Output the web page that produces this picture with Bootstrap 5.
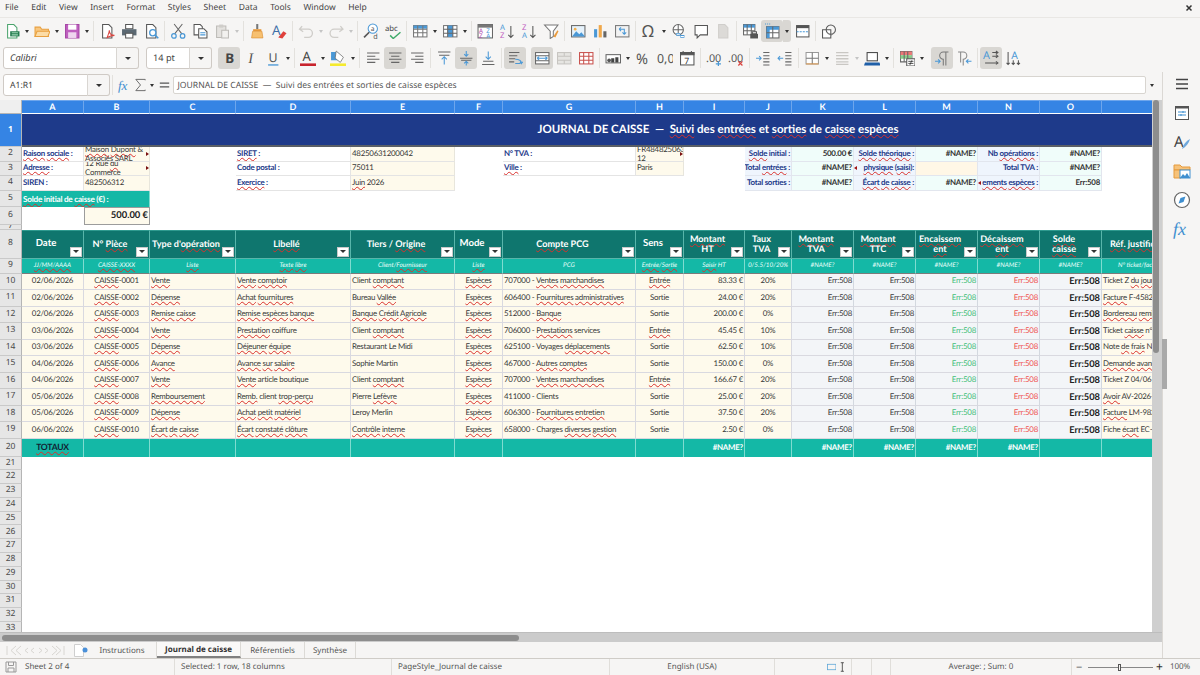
<!DOCTYPE html>
<html lang="en">
<head>
<meta charset="UTF-8">
<title>Journal de caisse - LibreOffice Calc</title>
<link href="https://cdn.jsdelivr.net/npm/bootstrap@5.3.3/dist/css/bootstrap.min.css" rel="stylesheet">
<style>
html,body{height:675px;overflow:hidden}
body{background:#f6f5f4;font-family:"Noto Sans",sans-serif;font-size:8.6px;color:#3d3d3d;text-rendering:geometricPrecision}
.menubar{height:18px;padding-left:5px;gap:12.6px;border-bottom:1px solid #e9e7e4;font-size:8.5px;line-height:16px;color:#444}
.menubar .nav-link{padding:0;color:#444}
.tbar{height:26px;padding-left:1px}
.tbar2{height:28px}
.tb{width:22px;height:22px;flex:none;display:flex;align-items:center;justify-content:center;border-radius:3px}
.tb svg{width:16.5px;height:16.5px;display:block}
.tb.on,.ar.on{background:#d9d7d3}
.ar{width:8px;height:22px;flex:none;display:flex;align-items:center;justify-content:center;border-radius:0 3px 3px 0}
.ar::after{content:"";border:solid transparent;border-width:3px 2.5px 0;border-top-color:#333}
.ar.dim::after{border-top-color:#c4c4c4}
.vsep{width:5px;height:20px;flex:none;display:flex;justify-content:center}
.vsep::after{content:"";width:1px;background:#e3e1dd}
.vgap{width:5px;flex:none}
.combo{height:22px;flex:none}
.combo .form-control,.namebox .form-control{font-size:8.6px;padding:0 6px;border-color:#cfcac5;border-radius:3px 0 0 3px;line-height:20px;color:#444;background:#fff;box-shadow:none}
.combo .form-control{font-size:9.2px}
.combo .btn,.namebox .btn{width:23px;padding:0;border:1px solid #cfcac5;border-left-color:#d9d6d2;border-radius:0 3px 3px 0;background:#f6f5f4;display:flex;align-items:center;justify-content:center}
.combo .btn::after,.namebox .btn::after{content:"";border:solid transparent;border-width:3.5px 3.5px 0;border-top-color:#333}
.fontbox{width:136px;margin-left:3px}
.sizebox{width:66px;margin:0 6px 0 7px}
.workarea{height:586px}
.leftcol{width:1162px;flex:none}
.fbar{height:28px;padding:1px 0 3px 3px}
.namebox{width:107px;height:22px;flex:none}
.fx-ico{width:15px;flex:none;display:flex;justify-content:center;margin-left:1.5px}
.fx-ico svg{width:16px;height:16px}
.sig{margin-left:1px}
.finput{width:973px;height:18px;margin:0 2px 0 .5px;flex:none;background:#fff;border:1px solid #d8d5d0;border-radius:2px;font-size:8.6px;line-height:16px;padding:0 4px;color:#555;white-space:pre}
.sidebar{width:38px;flex:none;border-left:1px solid #dbd8d4;padding-top:2px}
.side-ico{width:20px;height:20px;margin-bottom:9px}
.side-ico:first-of-type{margin-bottom:12px}
.side-ico svg{width:20px;height:20px;display:block}
.side-handle{top:267px;left:-1px;width:5px;height:50px;background:#a9a9a9}
.sheet-wrap{height:532px}
.sheet{width:1152px;height:532px;overflow:hidden;display:grid;background:#fff;
  grid-template-columns:22px 62px 66px 86px 115px 104px 48px 133px 48px 61px 47px 62px 62px 62px 62px 62px 312px;
  grid-template-rows:14px 33px 14.5px 14.5px 14.5px 16.5px 17.5px 5px 29px 15px repeat(10,16.5px) 18px repeat(13,13.8px);
  font-family:Lato,sans-serif;font-size:7.9px;letter-spacing:-.24px;color:#3a3a3a}
.ce{display:flex;align-items:center;overflow:hidden;white-space:nowrap;padding:0 1px;min-width:0;min-height:0;position:relative}
.ce>span{flex:none}
.ce u{text-decoration:underline wavy #d9302c 1px;text-decoration-skip-ink:none;text-underline-offset:.5px}
.corner{background:#efefef;border-right:1px solid #b5b5b5;border-bottom:1px solid #b5b5b5}
.colh{background:#3584e4;color:#fff;font-weight:700;justify-content:center;border-right:1px solid #6ea6ec;border-bottom:1px solid #fff;font-size:9px;border-top:1px solid #6ea6ec;letter-spacing:0}
.rowh{background:#e6e6e6;color:#4a4a4a;justify-content:center;border-right:1px solid #b5b5b5;border-bottom:1px solid #c9c9c9;font-family:"Noto Sans",sans-serif;font-size:8.5px;letter-spacing:0}
.rowh.sel{background:#3584e4;color:#fff;font-weight:700}
.title{background:#1e3a8a;color:#fff;font-weight:700;font-size:11.5px;letter-spacing:0;justify-content:center;white-space:pre;border-bottom:2px solid #5a5f66}
.lab{background:#fff;color:#1e3a8a;font-weight:700;border-right:1px solid #e4e4e4;border-bottom:1px solid #e4e4e4}
.val{background:#fefaec;border-right:1px solid #e8e6dc;border-bottom:1px solid #e4e4e4}
.kl{background:#eff5fd;color:#1e3a8a;font-weight:700;border-right:1px solid #e2e6ee;border-bottom:1px solid #e2e6ee}
.kv{background:#f0fdfa;color:#333;font-weight:700;border-right:1px solid #e2e6ee;border-bottom:1px solid #e2e6ee}
.kv.inp{background:#fff7e6}
.wrap2{white-space:normal;line-height:9px}
.wrap2>span{flex:auto}
.ofr::after{content:"";position:absolute;right:0;top:50%;margin-top:-2px;border:solid transparent;border-width:2px 0 2px 3px;border-left-color:#7a1010}
.ofl::after{content:"";position:absolute;left:0;top:50%;margin-top:-2px;border:solid transparent;border-width:2px 3px 2px 0;border-right-color:#a01414}
.teal{background:#14b8a6;color:#fff;font-weight:700;border-right:1px solid #7fdcd0}
.solde0{font-size:8.2px}
.balance{background:#fefaec;border:1.5px solid #9c9c9c;color:#222;font-weight:700;font-size:9.4px;letter-spacing:0}
.hd{background:#0f766e;color:#fff;font-weight:700;font-size:9.1px;letter-spacing:0;padding:0 14px 0 1px;justify-content:center;text-align:center;line-height:10.5px;border-right:1px solid #58b5aa;border-bottom:1px solid #58b5aa;border-top:1px solid #2f9a8f}
.hd.big{font-size:9.6px}
.hint{background:#14b8a6;color:#e9fffb;font-style:italic;font-size:6.4px;letter-spacing:0;justify-content:center;border-right:1px solid #7fdcd0;border-bottom:1.5px solid #7b7b7b}
.flt{position:absolute;right:1px;bottom:1px;width:12px;height:10px;background:#fff;border:1px solid #c9c9c9;display:flex;align-items:center;justify-content:center}
.flt::after{content:"";border:solid transparent;border-width:3px 3px 0;border-top-color:#333}
.rw{background:#fefaec;border-right:1px solid #d9d9e0;border-bottom:1px solid #d9d9e0}
.calc{background:#f3f5f8;border-right:1px solid #d3d8df;border-bottom:1px solid #d9d9e0}
.grn{color:#3fbf78}
.red{color:#ef5350}
.errb{font-weight:700;font-size:9.3px;letter-spacing:0;color:#222}
.tot-l{color:#123;font-size:8.6px}
.vscroll{width:10px;flex:none;background:#cfcfcf;padding:0 3px 0 1px}
.vscroll div{height:253px;background:#8d8d8d;border-radius:3px}
.hscroll{height:10px;background:#cbcbcb;padding:2px 0 2px 2px;border-top:1px solid #bdbdbd}
.hscroll div{width:517px;height:6px;background:#8d8d8d;border-radius:3px}
.tabbar{height:16px;font-size:8px;color:#555;padding-left:6px}
.navpale{width:59px;height:11px;flex:none}
.navpale svg{display:block}
.newsheet{margin-left:9px}
.newdot{margin-left:-3px;margin-right:-1px;flex:none}
.tabbar .nav-link{padding:0;color:#555;line-height:15px}
.tabpad{flex:none;height:16px;border-right:1px solid #dcdad6;display:flex;align-items:center;justify-content:center}
.tabpad.cur{background:#faf9f8;border-bottom:2px solid #808080;font-weight:700;color:#333}
.statbar{height:17px;border-top:1px solid #cfccc7;font-size:8px;color:#555}
.stc{flex:none;height:16px;line-height:16px;border-right:1px solid #e0deda;padding:0 6px;white-space:nowrap}
.slider-line{width:65px;height:1px;background:#888;position:relative}
.slider-thumb{position:absolute;left:30px;top:-3px;width:3px;height:7px;background:#f6f5f4;border:1px solid #555}
.closex{flex:none;margin:4px 7px 0 auto;width:8px;height:8px}
.st-a{width:175px;padding-left:5px}.st-b{width:217px}.st-c{width:218px}.st-d{width:165px}.st-e{width:77px;padding-left:52px}.st-f{width:20px}.st-g{width:19px}.st-h{width:181px}
.st-z{padding-left:4px}.st-m{font-size:11px;line-height:11px;width:12px}.st-p{font-size:12px;line-height:12px;color:#333;margin-left:3px}.st-q{margin-left:7px}
#t1{width:69px}#t2{width:84px}#t3{width:64px}#t4{width:51px}
</style>
</head>
<body class="d-flex flex-column">

<nav class="nav menubar flex-nowrap">
  <a class="nav-link">File</a><a class="nav-link">Edit</a><a class="nav-link">View</a><a class="nav-link">Insert</a><a class="nav-link">Format</a><a class="nav-link">Styles</a><a class="nav-link">Sheet</a><a class="nav-link">Data</a><a class="nav-link">Tools</a><a class="nav-link">Window</a><a class="nav-link">Help</a>
  <svg class="closex" viewBox="0 0 8 8"><path d="M1.5 1.5l5 5M6.5 1.5l-5 5" stroke="#333" stroke-width="1.5"/></svg>
</nav>

<div class="tbar d-flex align-items-center" id="tb1"></div>

<div class="tbar2 d-flex align-items-center">
  <div class="input-group flex-nowrap combo fontbox"><div class="form-control fst-italic">Calibri</div><button class="btn" type="button"></button></div>
  <div class="input-group flex-nowrap combo sizebox"><div class="form-control">14 pt</div><button class="btn" type="button"></button></div>
  <div class="d-flex align-items-center" id="tb2"></div>
</div>

<div class="workarea d-flex">
  <div class="leftcol d-flex flex-column">
    <div class="fbar d-flex align-items-center">
      <div class="input-group flex-nowrap namebox"><div class="form-control">A1:R1</div><button class="btn" type="button"></button></div>
      <div class="vsep"></div>
      <div class="fx-ico"><svg viewBox="0 0 16 16"><text x="1" y="13" font-family="Liberation Serif,serif" font-style="italic" font-size="14" fill="#3f8fd0">fx</text></svg></div>
      <div class="fx-ico sig"><svg viewBox="0 0 16 16"><path d="M13 3V2H3l5 6-5 6h10v-1" fill="none" stroke="#666"/></svg></div>
      <div class="ar"></div>
      <div class="fx-ico"><svg viewBox="0 0 16 16"><path d="M3 6h10M3 10h10" stroke="#555" stroke-width="1.4"/></svg></div>
      <div class="finput">JOURNAL DE CAISSE  —  Suivi des entrées et sorties de caisse espèces</div>
      <div class="ar"></div>
    </div>
    <div class="sheet-wrap d-flex">
      <div class="sheet" id="sheet"></div>
      <div class="vscroll"><div></div></div>
    </div>
    <div class="hscroll"><div></div></div>
    <div class="tabbar d-flex align-items-center">
      <div class="navpale"><svg width="59" height="11" viewBox="0 0 59 11" fill="none" stroke="#d8d6d2"><path d="M1 1v9M10 1l-5 4.5 5 4.5M15 1l-5 4.5 5 4.5M22 3l-3 2.5 3 2.5M28 3l-3 2.5 3 2.5M33 3l3 2.5-3 2.5M39 3l3 2.5-3 2.5M46 1l5 4.5-5 4.5M50 1l5 4.5-5 4.5M58 1v9"/></svg></div>
      <svg class="newsheet" width="10" height="13" viewBox="0 0 10 13"><path d="M.5.5h6l3 3v9H.5z" fill="#fff" stroke="#cfcfcf"/></svg>
      <svg class="newdot" width="8" height="8" viewBox="0 0 8 8"><circle cx="4" cy="4" r="2.5" fill="#4a90d9"/></svg>
      <nav class="nav flex-nowrap">
        <a class="nav-link tabpad" id="t1">Instructions</a>
        <a class="nav-link tabpad cur" id="t2">Journal de caisse</a>
        <a class="nav-link tabpad" id="t3">Référentiels</a>
        <a class="nav-link tabpad" id="t4">Synthèse</a>
      </nav>
    </div>
  </div>
  <div class="sidebar d-flex flex-column align-items-center position-relative">
    <div class="side-handle position-absolute"></div>
    <div class="side-ico"><svg viewBox="0 0 20 20"><path d="M4 5.5h12M4 10h12M4 14.5h12" stroke="#444" stroke-width="1.7" fill="none"/></svg></div>
    <div class="side-ico"><svg viewBox="0 0 20 20"><rect x="3.5" y="3.5" width="13" height="13" fill="#fff" stroke="#555"/><path d="M3.5 3.5h13v2h-13z" fill="#555"/><path d="M6 9h8M6 12h8" stroke="#3f8fd0"/><path d="M11 8v2M9 11v2" stroke="#3f8fd0"/></svg></div>
    <div class="side-ico"><svg viewBox="0 0 20 20"><text x="2" y="15" font-family="Noto Sans,sans-serif" font-size="15" fill="#444">A</text><path d="M10 17c1-4 4-8 8-10-1 4-4 8-8 10z" fill="#6fa8dc"/></svg></div>
    <div class="side-ico"><svg viewBox="0 0 20 20"><path d="M2 4h6l2 2h8v3H2z" fill="#f6c27a" stroke="#e59a3c"/><path d="M2 9h7v8H2z" fill="#f6c27a" stroke="#e59a3c"/><rect x="8" y="9" width="10" height="8" fill="#fff" stroke="#3f8fd0"/><path d="M8 17l3-4 2 2 2-3 3 5z" fill="#3f8fd0"/></svg></div>
    <div class="side-ico"><svg viewBox="0 0 20 20"><circle cx="10" cy="10" r="7.5" fill="#fff" stroke="#666" stroke-width="1.2"/><path d="M6.5 13.5l2-5.5 5-1.5-2 5.5z" fill="#3f8fd0"/></svg></div>
    <div class="side-ico"><svg viewBox="0 0 20 20"><text x="1" y="16" font-family="Liberation Serif,serif" font-style="italic" font-size="18" fill="#3f8fd0">fx</text></svg></div>
  </div>
</div>

<div class="statbar d-flex align-items-center">
  <div class="stc d-flex align-items-center st-a"><svg width="12" height="12" viewBox="0 0 12 12" class="me-2" fill="none" stroke="#999"><path d="M1 1h10v10H1zM3.5 1v3.5h5V1M3 11V7h6v4"/></svg>Sheet 2 of 4</div>
  <div class="stc st-b">Selected: 1 row, 18 columns</div>
  <div class="stc st-c">PageStyle_Journal de caisse</div>
  <div class="stc st-d text-center">English (USA)</div>
  <div class="stc st-e d-flex align-items-center"><svg width="12" height="8" viewBox="0 0 12 8"><rect x=".5" y=".5" width="11" height="7" fill="none" stroke="#5aa5d6"/></svg><svg width="6" height="12" viewBox="0 0 6 12" class="ms-1" fill="none" stroke="#333"><path d="M1 .5h4M3 .5v11M1 11.5h4"/></svg></div>
  <div class="stc st-f"></div>
  <div class="stc st-g"></div>
  <div class="stc st-h text-center">Average: ; Sum: 0</div>
  <div class="d-flex align-items-center flex-grow-1 st-z">
    <span class="st-m">−</span><div class="slider-line"><div class="slider-thumb"></div></div><span class="st-p">+</span><span class="st-q">100%</span>
  </div>
</div>

<script>
const S='#555',B='#4a98d6';
const docp='M3.5 1.5h6l3 3v10h-9z';
const ico={
new:`<path d="${docp}" fill="#fff" stroke="#4aa36c"/><path d="M6 8h9v5H6z" fill="#237a4e"/><path d="M7.5 9.5h6M7.5 11.5h6" stroke="#9ed6b5"/>`,
open:`<path d="M1 13V4h5l1.5 2H14v7z" fill="#f9c77f" stroke="#e8a03f"/><path d="M1 13l2-5h12.5l-2 5z" fill="#fcdca6" stroke="#e8a03f"/>`,
save:`<path d="M1.5 1.5h13v13h-13z" fill="#bf5fbf" stroke="#a445a4"/><path d="M4 1.5h8v5H4z" fill="#fff"/><path d="M4 9h8v5.5H4z" fill="#efd5ef"/>`,
pdf:`<path d="${docp}" fill="#fff" stroke="${S}"/><path d="M8 14c1-3 2-5 2-7 0 3 2 5 5 5-3 0-5 1-7 2z" fill="none" stroke="#d9443f"/>`,
print:`<path d="M4.5 1.5h7v4h-7z" fill="#fff" stroke="${S}"/><path d="M1 6h14v6H1z" fill="#5b6872"/><path d="M4.5 10h7v4.5h-7z" fill="#fff" stroke="${S}"/>`,
prev:`<path d="${docp}" fill="#fff" stroke="${S}"/><circle cx="9.5" cy="9.5" r="3" fill="#fff" stroke="${B}" stroke-width="1.3"/><path d="M11.8 11.8l3 3" stroke="${B}" stroke-width="1.5"/>`,
cut:`<path d="M4 1l7.5 9.5M12 1L4.5 10.5" stroke="#666" fill="none"/><circle cx="3.8" cy="12.5" r="2.2" fill="none" stroke="${B}" stroke-width="1.2"/><circle cx="12.2" cy="12.5" r="2.2" fill="none" stroke="${B}" stroke-width="1.2"/>`,
copy:`<path d="M2 1.5h6l2 2v8H2z" fill="#fff" stroke="${S}"/><path d="M6.5 5.5h5l3 3v6h-8z" fill="#fff" stroke="${S}"/><path d="M8 9.5h5M8 11.5h5" stroke="${B}"/>`,
paste:`<path d="M2.5 3h9v11h-9z" fill="#e4e2df" stroke="#bdbbb7"/><path d="M5 1.5h4v3H5z" fill="#cfcdc9"/><path d="M7.5 7h6.5v7.5H7.5z" fill="#f2f1ef" stroke="#bdbbb7"/>`,
clone:`<path d="M7 1h2v5H7z" fill="#777"/><path d="M4 6h8v2H4z" fill="#e89a3c"/><path d="M3.5 8h9l1 6.5h-11z" fill="#f7c070" stroke="#d98a2c" stroke-width=".6"/>`,
clear:`<text x="1" y="12" font-family="Noto Sans,sans-serif" font-size="13" fill="#3f6fa8">A</text><path d="M7 14l5-6 3 2-4 5z" fill="#e0413c"/>`,
undo:`<path d="M4 3L1.5 6 5 8.5M2 6h8a4 4 0 0 1 0 8H6" fill="none" stroke="#cfcdc9" stroke-width="1.3"/>`,
redo:`<path d="M12 3l2.5 3L11 8.5M14 6H6a4 4 0 0 0 0 8h4" fill="none" stroke="#cfcdc9" stroke-width="1.3"/>`,
find:`<circle cx="9.5" cy="5.5" r="4.5" fill="#fff" stroke="${B}"/><path d="M6 9l-5 5" stroke="#555" stroke-width="1.6"/><text x="7.6" y="7.5" font-family="Noto Sans,sans-serif" font-size="6.5" fill="#555">a</text><text x="10" y="15.5" font-family="Noto Sans,sans-serif" font-size="7" fill="#555">d</text>`,
spell:`<text x="0" y="8" font-family="Noto Sans,sans-serif" font-size="7.5" fill="#444">abc</text><path d="M5 12l3 3 7-6" fill="none" stroke="#3faa6a" stroke-width="1.4"/>`,
rows:`<rect x="1.5" y="2.5" width="13" height="11" fill="#fff" stroke="#777"/><path d="M1.5 2.5h13v3h-13z" fill="${B}"/><path d="M1.5 9.5h13M5.5 2.5v11M10.5 2.5v11M1.5 6h13" stroke="#777" fill="none"/>`,
cols:`<rect x="1.5" y="2.5" width="13" height="11" fill="#fff" stroke="#777"/><path d="M5.5 2.5h5v11h-5z" fill="${B}"/><path d="M1.5 6h13M1.5 10h13M5.5 2.5v11M10.5 2.5v11" stroke="#666" fill="none"/>`,
sortg:`<rect x="1" y="1.5" width="14" height="13" fill="#fff" stroke="#666"/><path d="M1 1.5h14v3H1z" fill="#777"/><text x="2" y="9.5" font-size="6" font-family="Noto Sans,sans-serif" fill="#b04db0">A</text><text x="9" y="9.5" font-size="6" font-family="Noto Sans,sans-serif" fill="${B}">Z</text><text x="2" y="14.5" font-size="6" font-family="Noto Sans,sans-serif" fill="#b04db0">Z</text><text x="9" y="14.5" font-size="6" font-family="Noto Sans,sans-serif" fill="${B}">A</text>`,
asc:`<text x="1" y="7" font-size="7.5" font-family="Noto Sans,sans-serif" fill="${B}">A</text><text x="1" y="15" font-size="7.5" font-family="Noto Sans,sans-serif" fill="#c05cc0">Z</text><path d="M11.5 3v11M9 11.5l2.5 2.5 2.5-2.5" fill="none" stroke="${S}"/>`,
desc:`<text x="1" y="7" font-size="7.5" font-family="Noto Sans,sans-serif" fill="#c05cc0">Z</text><text x="1" y="15" font-size="7.5" font-family="Noto Sans,sans-serif" fill="${B}">A</text><path d="M11.5 3v11M9 11.5l2.5 2.5 2.5-2.5" fill="none" stroke="${S}"/>`,
filt:`<path d="M1.5 2h13L10 8v5l-3 2V8z" fill="#fff" stroke="#777"/><path d="M10 13l4-6 1 1-3 6z" fill="#e99a3c"/>`,
img:`<rect x="1.5" y="2.5" width="13" height="11" fill="#e6f2fb" stroke="#666"/><path d="M2 13l4-5 3 3 2-2 3.5 4z" fill="${B}"/><circle cx="5" cy="6" r="1.3" fill="#f5b14c"/>`,
chart:`<path d="M2 6h3v8H2z" fill="${B}"/><path d="M6.5 2h3v12h-3z" fill="#f0a84a"/><path d="M11 8h3v6h-3z" fill="#666"/>`,
pivot:`<rect x="1.5" y="2.5" width="13" height="11" fill="#f2f2f2" stroke="#777"/><path d="M5 6h5v5M10 11l-1.8-1.8M10 11l1.8-1.8M5 6l1.8-1.8M5 6l1.8 1.8" fill="none" stroke="${B}"/>`,
omega:`<text x="1" y="14" font-family="Noto Sans,sans-serif" font-size="16" fill="#555">Ω</text>`,
link:`<circle cx="7" cy="6.5" r="5" fill="#fff" stroke="#666"/><path d="M2 6.5h10M7 1.5v10" stroke="#666"/><path d="M5 11h4M9 13h4" stroke="${B}" stroke-width="2.6"/><path d="M5.5 11h3M9.5 13h3" stroke="#fff"/>`,
note:`<path d="M2 2.5h12v9H7l-3 3v-3H2z" fill="#fff" stroke="${S}"/>`,
hdr:`<path d="M3.5 1.5h6l3 3v10h-9z" fill="#dcdad7" stroke="#d0cecb"/>`,
prange:`<rect x="1.5" y="1.5" width="11" height="10" fill="#fff" stroke="#666"/><path d="M1.5 1.5h11v3h-11z" fill="${B}"/><path d="M1.5 7.5h11M5 1.5v10M9 1.5v10" stroke="#666"/><path d="M8 10.5h7.5V15H8z" fill="#555"/><path d="M10 8.5h4v2h-4z" fill="#fff" stroke="#555"/>`,
freeze:`<rect x="2.5" y="3.5" width="12" height="11" fill="#fff" stroke="#666"/><path d="M2.5 3.5h12v3h-12zM2.5 3.5h3v11h-3z" fill="${B}"/><path d="M2.5 9.5h12M8.5 3.5v11" stroke="#666"/><path d="M1 1h5" stroke="${B}" stroke-dasharray="1 1"/>`,
split:`<rect x="2.5" y="2.5" width="12" height="11" fill="#fff" stroke="#555"/><path d="M2.5 2.5h12v2.5h-12z" fill="#555"/><path d="M2.5 8.5h12" stroke="${B}" stroke-dasharray="2 1"/>`,
shape:`<path d="M1.5 6.5h8v8h-8z" fill="#fff" stroke="#555"/><circle cx="9.5" cy="6.5" r="4.5" fill="none" stroke="#555"/><path d="M6 9l3.5 3.5L13 9" fill="none" stroke="#888" stroke-width=".7"/>`,
B:`<text x="4" y="13" font-family="Noto Sans,sans-serif" font-weight="700" font-size="13" fill="#444">B</text>`,
I:`<text x="5" y="13" font-family="Liberation Serif,serif" font-style="italic" font-size="14" fill="#555">I</text>`,
U:`<text x="3.5" y="11.5" font-family="Noto Sans,sans-serif" font-size="12" fill="#555">U</text><path d="M3 14.5h10" stroke="${B}" stroke-width="1.3"/>`,
fcol:`<text x="2.5" y="11" font-family="Noto Sans,sans-serif" font-size="12.5" fill="#444">A</text><path d="M0 13h16v3H0z" fill="#c8232c"/>`,
bcol:`<path d="M1 2h6l3 3v5H1z" fill="#4a98d6"/><path d="M6 1l7 6-3 5-5-4z" fill="#fff" stroke="#666" stroke-width=".7"/><path d="M0 13h16v3H0z" fill="#f5ea2e"/>`,
al:`<path d="M2 3h12M2 6h8M2 9h12M2 12h8" stroke="#666" fill="none"/>`,
ac:`<path d="M2 3h12M4 6h8M2 9h12M4 12h8" stroke="#666" fill="none"/>`,
ar:`<path d="M2 3h12M6 6h8M2 9h12M6 12h8" stroke="#666" fill="none"/>`,
vt:`<path d="M2 2h12M3 5h10" stroke="#666" fill="none"/><path d="M8 14V6.5M5.5 9L8 6.5 10.5 9" fill="none" stroke="${B}"/>`,
vc:`<path d="M2 8h12M3 10h10" stroke="#666" fill="none"/><path d="M8 1v5M6 4l2 2 2-2M8 15v-4M6 13l2-2 2 2" fill="none" stroke="${B}"/>`,
vb:`<path d="M2 14h12M3 11h10" stroke="#666" fill="none"/><path d="M8 1.5V9M5.5 6.5L8 9l2.5-2.5" fill="none" stroke="${B}"/>`,
wrapt:`<path d="M2 2.5h10M2 5.5h8M2 8.5h6M2 11.5h5" stroke="#666" fill="none"/><path d="M8 9c4 0 6 1 6 4l-1.5-1.5M14 13l1.5-1.5M8 13h5" fill="none" stroke="${B}"/>`,
merge:`<rect x="1.5" y="2.5" width="13" height="11" fill="#fff" stroke="#666"/><path d="M1.5 5.5h13M1.5 10.5h13" stroke="#666"/><path d="M3 8h10M3 8l2-1.5M3 8l2 1.5M13 8l-2-1.5M13 8l-2 1.5" stroke="${B}" fill="none"/>`,
merge2:`<rect x="1.5" y="2.5" width="13" height="11" fill="#e6e5e2" stroke="#c6c4c0"/><path d="M1.5 6h13M1.5 10h13M8 2.5V6M8 10v3.5" stroke="#c6c4c0"/>`,
merge3:`<rect x="1.5" y="2.5" width="13" height="11" fill="#fff" stroke="#c8504c"/><path d="M1.5 6h13M1.5 10h13M5.5 2.5v11M10.5 2.5v11" stroke="#c8504c"/>`,
cur:`<rect x="1" y="4.5" width="14" height="8" fill="#fff" stroke="#666"/><path d="M6 8h3v4H6zM10 7h3v5h-3z" fill="#444"/><circle cx="4" cy="10" r="1.8" fill="#555"/>`,
pct:`<text x="1" y="13.5" font-family="Noto Sans,sans-serif" font-size="14" fill="#555">%</text>`,
num:`<text x="0" y="13" font-family="Noto Sans,sans-serif" font-size="12" fill="#555">0,0</text>`,
date:`<rect x="1.5" y="2.5" width="13" height="12" fill="#fff" stroke="#555"/><path d="M1.5 2.5h13v2h-13zM4 1v2M12 1v2" fill="#555" stroke="#555"/><text x="5" y="13.5" font-family="Noto Sans,sans-serif" font-size="8.5" fill="#333">7</text>`,
dplus:`<text x="0" y="12" font-family="Noto Sans,sans-serif" font-size="10.5" fill="#555">.00</text><path d="M12 11v4.5M9.5 13.5h5" stroke="${B}" stroke-width="1.2"/>`,
dminus:`<text x="0" y="12" font-family="Noto Sans,sans-serif" font-size="10.5" fill="#555">.00</text><path d="M10 11l4 4M14 11l-4 4" stroke="#d9443f" stroke-width="1.2"/>`,
ind:`<path d="M8 2.5h6M8 5.5h6M8 8.5h6M8 11.5h6M8 14.5h6" stroke="#666"/><path d="M1 8h5M4 6l2 2-2 2" fill="none" stroke="${B}"/>`,
outd:`<path d="M8 2.5h6M8 5.5h6M8 8.5h6M8 11.5h6M8 14.5h6" stroke="#666"/><path d="M6 8H1M3 6L1 8l2 2" fill="none" stroke="${B}"/>`,
bord:`<path d="M2 2.5h12v11H2z" fill="#fff" stroke="#999"/><path d="M8 2.5v11M2 8h12" stroke="#777"/><path d="M2 13.5h12" stroke="#e09a4c"/>`,
bstyle:`<path d="M2 2.5h12M2 5.5h12M2 8.5h12M2 11.5h12M2 14h12" stroke="#c9c7c3" stroke-width="1.3"/>`,
bcolr:`<rect x="3" y="2.5" width="10" height="8" fill="#fff" stroke="#444"/><path d="M1 12h14l1 3H0z" fill="#1f5fa8"/>`,
cond:`<path d="M1.5 1.5h11v10h-11z" fill="#fff" stroke="#666"/><path d="M1.5 1.5h11V5h-11z" fill="#e77"/><path d="M1.5 5h11v3.5h-11z" fill="#8c8"/><path d="M5 1.5v10M8.5 1.5v10" stroke="#666"/><rect x="7.5" y="8.5" width="8" height="7" fill="#fff" stroke="#555"/><path d="M9 11h5M9 13h5M12.5 10l-2 4.5" stroke="#333" stroke-width=".8"/>`,
ltr:`<path d="M14 2H9a3.5 3.5 0 0 0 0 7V15M11.5 2v13" fill="none" stroke="#777"/><path d="M1 11h5M4 9l2 2-2 2" fill="none" stroke="${B}"/>`,
rtl:`<path d="M2 2h5a3.5 3.5 0 0 1 0 7V15M4.5 2v10" fill="none" stroke="#888"/><path d="M15 11h-5M12 9l-2 2 2 2" fill="none" stroke="${B}"/>`,
ah:`<text x="0" y="9" font-family="Noto Sans,sans-serif" font-size="10.5" fill="${B}">A</text><path d="M9 2.5h5M9 6h5M2 12.5h12" fill="none" stroke="#555"/><path d="M12.5 1l2 1.5-2 1.5M12.5 4.5l2 1.5-2 1.5M12.5 11l2 1.5-2 1.5" fill="none" stroke="#555"/>`,
av:`<text x="6" y="9" font-family="Noto Sans,sans-serif" font-size="10" fill="${B}">A</text><path d="M3 2v12M1.5 12.5L3 14l1.5-1.5M8 10v4M6.5 12.5L8 14l1.5-1.5M13 10v4M11.5 12.5L13 14l1.5-1.5" fill="none" stroke="#555"/>`
};
// ">" arrow, ">-" pale arrow, "|" separator, "_" empty gap, "*" = active
function buildBar(id,spec){
  document.getElementById(id).innerHTML=spec.trim().split(/\s+/).map(k=>{
    const on=k.endsWith('*')?' on':'';k=k.replace('*','');
    if(k=='>')return `<div class="ar${on}"></div>`;
    if(k=='>-')return '<div class="ar dim"></div>';
    if(k=='|')return '<div class="vsep"></div>';
    if(k=='_')return '<div class="vgap"></div>';
    return `<div class="tb${on}"><svg viewBox="0 0 16 16">${ico[k]}</svg></div>`;
  }).join('');
}
buildBar('tb1','new > open > save > | pdf print prev | cut copy paste >- | clone clear | undo >- redo >- | find spell | rows > cols > | sortg asc desc filt | img chart pivot | omega > link note hdr | prange freeze* >* split | shape');
buildBar('tb2','B* I U > | fcol > bcol > | al ac* ar | vt vc* vb | wrapt* _ merge* merge2 merge3 | cur > pct num date | dplus dminus | ind outd | bord > bstyle >- bcolr > | cond > _ ltr* rtl | ah* av');

// sheet: ~word~ is a spell-check squiggle
const sheet=[];
const fmt=t=>t.replace(/~([^~]+)~/g,'<u>$1</u>');
function c(t,cls='',span=1,extra=''){
  sheet.push(`<div class="ce ${cls}"${span>1?` style="grid-column:span ${span}"`:''}><span>${fmt(t)}</span>${extra}</div>`);
}
const END='justify-content-end',MID='justify-content-center',FLT='<div class="flt"></div>';
c('','corner');
'ABCDEFGHIJKLMNOP'.split('').forEach(l=>c(l,'colh'));
c('1','rowh sel');c('JOURNAL DE CAISSE  —  ~Suivi~ des ~entrées~ et ~sorties~ de ~caisse~ ~espèces~','title',16);
// rows 2-4
const info=[
 ['~Raison~ ~sociale~ :','~Maison~ ~Dupont~ &<br>~Associés~ SARL ofr','~SIRET~ :','48250631200042','N° TVA :','FR484825063<br>12 ofr','~Solde~ initial :','500.00 €','~Solde~ ~théorique~ :','#NAME?','Nb ~opérations~ :','#NAME?'],
 ['~Adresse~ :','12 Rue ~du~<br>Commerce ofr','Code postal :','75011','~Ville~ :','Paris','Total ~entrées~ :','#NAME?','~physique~ (~saisi~): ofl','','Total TVA :','#NAME?'],
 ['SIREN :','482506312','~Exercice~ :','~Juin~ 2026','','','Total sorties :','#NAME?','~Écart~ ~de~ ~caisse~ :','#NAME?','~ements~ ~espèces~ : ofl','Err:508']
];
info.forEach((r,i)=>{
  c(String(i+2),'rowh');
  const val=(t,x='')=>{const m=t.match(/ (ofr|ofl)$/);const tt=m?t.slice(0,-4):t;return c(tt,(m?m[1]+' ':'')+x)};
  val(r[0],'lab');val(r[1],'val'+(r[1].includes('<br>')?' wrap2':''));
  c('','',1);
  val(r[2],'lab');val(r[3],'val');
  c('','',1);
  if(r[4]||r[5]){val(r[4],'lab');val(r[5],'val'+(r[5].includes('<br>')?' wrap2':''));}else{c('');c('');}
  c('','',1);
  val(r[6],'kl '+END);val(r[7],'kv '+END);
  val(r[8],'kl '+END);val(r[9],'kv '+END+(r[9]?'':' inp'));
  val(r[10],'kl '+END);val(r[11],'kv '+END);
  c('');
});
// rows 5-7
c('5','rowh');c('~Solde~ initial de ~caisse~ (€) :','teal solde0',2);c('','',14);
c('6','rowh');c('');c('500.00 €','balance '+END);c('','',14);
c('7','rowh');c('','',16);
// header row
c('8','rowh');
[['Date','big'],['N° ~Pièce~'],['Type d\'~opération~'],['~Libellé~'],['Tiers / ~Origine~'],['Mode','big'],['~Compte~ PCG'],['Sens','big'],['~Montant~<br>HT'],['Taux<br>TVA'],['~Montant~<br>TVA'],['~Montant~<br>TTC'],['~Encaissem~<br>~ent~'],['~Décaissem~<br>~ent~'],['~Solde~<br>~caisse~'],['~Réf.~ ~justificatif~']].forEach((h,i)=>{
  c(h[0],'hd '+(h[1]||'')+(i==15?' justify-content-start ps-2':''),1,i==15?'':FLT);
});
c('9','rowh');
['~JJ/MM/AAAA~','~CAISSE-XXXX~','~Liste~','~Texte~ ~libre~','Client/~Fournisseur~','~Liste~','PCG','~Entrée~/~Sortie~','~Saisir~ HT','0/5.5/10/20%','#NAME?','#NAME?','#NAME?','#NAME?','#NAME?','N° ticket/facture'].forEach((t,i)=>c(t,'hint'+(i==15?' justify-content-start ps-3':'')));
// journal lines
const rows=[
['02/06/2026','0001','~Vente~','~Vente~ ~comptoir~','Client ~comptant~','707000 - ~Ventes~ ~marchandises~','~Entrée~','83.33','20%','Ticket Z ~du~ ~jour~'],
['02/06/2026','0002','~Dépense~','~Achat~ ~fournitures~','Bureau ~Vallée~','606400 - ~Fournitures~ ~administratives~','Sortie','24.00','20%','~Facture~ F-4582'],
['02/06/2026','0003','~Remise~ ~caisse~','~Remise~ ~espèces~ ~banque~','~Banque~ ~Crédit~ ~Agricole~','512000 - ~Banque~','Sortie','200.00','0%','~Bordereau~ ~remise~'],
['03/06/2026','0004','~Vente~','~Prestation~ coiffure','Client ~comptant~','706000 - ~Prestations~ services','~Entrée~','45.45','10%','Ticket ~caisse~ n°'],
['03/06/2026','0005','~Dépense~','~Déjeuner~ ~équipe~','Restaurant Le Midi','625100 - Voyages ~déplacements~','Sortie','62.50','10%','Note ~de~ ~frais~ N'],
['04/06/2026','0006','~Avance~','~Avance~ ~sur~ ~salaire~','Sophie Martin','467000 - ~Autres~ ~comptes~','Sortie','150.00','0%','~Demande~ ~avance~'],
['04/06/2026','0007','~Vente~','~Vente~ article boutique','Client ~comptant~','707000 - ~Ventes~ ~marchandises~','~Entrée~','166.67','20%','Ticket Z 04/06'],
['05/06/2026','0008','~Remboursement~','~Remb.~ client ~trop-perçu~','Pierre ~Lefèvre~','411000 - Clients','Sortie','25.00','20%','~Avoir~ AV-2026-'],
['05/06/2026','0009','~Dépense~','~Achat~ ~petit~ ~matériel~','Leroy Merlin','606300 - ~Fournitures~ ~entretien~','Sortie','37.50','20%','~Facture~ LM-982'],
['06/06/2026','0010','~Écart~ ~de~ ~caisse~','~Écart~ ~constaté~ ~clôture~','~Contrôle~ ~interne~','658000 - Charges ~diverses~ ~gestion~','Sortie','2.50','0%','Fiche ~écart~ EC-0']
];
rows.forEach((r,i)=>{
  c(String(i+10),'rowh');
  c(r[0],'rw '+MID);c('~CAISSE~-'+r[1],'rw '+MID);c(r[2],'rw');c(r[3],'rw');c(r[4],'rw');
  c('~Espèces~','rw '+MID);c(r[5],'rw');c(r[6],'rw '+MID);c(r[7]+' €','rw '+END);c(r[8],'rw '+MID);
  c('Err:508','calc '+END);c('Err:508','calc '+END);c('Err:508','calc grn '+END);c('Err:508','calc red '+END);c('Err:508','calc errb '+END);
  c(r[9],'rw');
});
c('20','rowh');
c('~TOTAUX~','teal tot-l '+MID);
for(let i=1;i<16;i++){c([8,10,11,12,13].includes(i)?'#NAME?':'','teal '+END);}
for(let n=21;n<=33;n++){c(String(n),'rowh');c('','',16);}
document.getElementById('sheet').innerHTML=sheet.join('');
</script>
<script src="https://cdn.jsdelivr.net/npm/bootstrap@5.3.3/dist/js/bootstrap.bundle.min.js"></script>
</body>
</html>
